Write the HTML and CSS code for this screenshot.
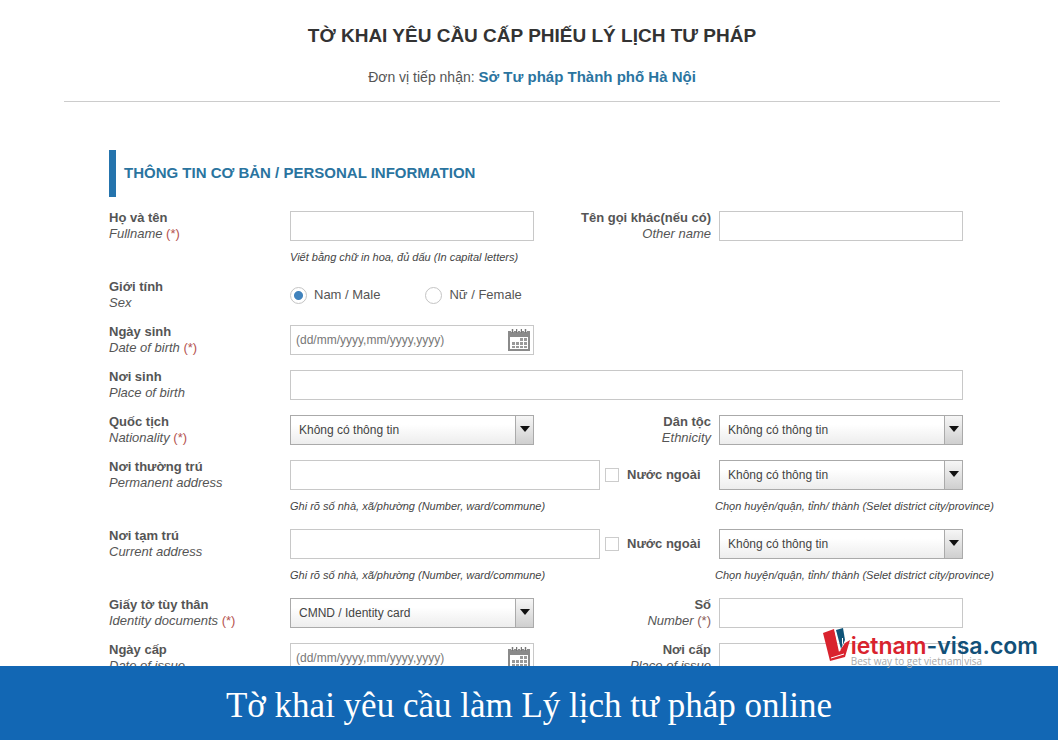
FILE: index.html
```html
<!DOCTYPE html>
<html lang="vi">
<head>
<meta charset="utf-8">
<meta name="viewport" content="width=device-width, initial-scale=1">
<title>Tờ khai yêu cầu cấp phiếu lý lịch tư pháp</title>
<link rel="stylesheet" href="styles.css">
</head>
<body>
<svg class="defs" aria-hidden="true">
  <symbol id="calendar" viewBox="0 0 24 24">
    <path fill="#8a8a8a" d="M1 3h22v20H1z"/>
    <path fill="#fff" d="M3 9h18v12H3z"/>
    <path fill="#ddd" d="M4 1h3v3H4zM9 1h2v3H9zM13 1h2v3h-2zM17 1h3v3h-3z"/>
    <path fill="#777" d="M5 1h1v4H5zM9 1h1v4H9zM14 1h1v4h-1zM18 1h1v4h-1z"/>
    <path fill="#999" d="M13 10h3v3h-3zM17 10h3v3h-3zM5 14h3v3H5zM9 14h3v3H9zM13 14h3v3h-3zM17 14h3v3h-3zM5 18h3v2H5zM9 18h3v2H9zM13 18h3v2h-3zM17 18h3v2h-3z"/>
  </symbol>
</svg>
<main class="page">
  <header class="head">
    <h1 class="title">TỜ KHAI YÊU CẦU CẤP PHIẾU LÝ LỊCH TƯ PHÁP</h1>
    <p class="unit">Đơn vị tiếp nhận: <strong class="unit-name">Sở Tư pháp Thành phố Hà Nội</strong></p>
  </header>
  <form class="form">
    <h2 class="section">THÔNG TIN CƠ BẢN / PERSONAL INFORMATION</h2>

    <div class="row">
      <label class="label" for="fullname"><b>Họ và tên</b><i>Fullname <span class="req">(*)</span></i></label>
      <div class="field"><input class="text" id="fullname" type="text"><p class="hint">Viết bằng chữ in hoa, đủ dấu (In capital letters)</p></div>
      <label class="label label-right" for="othername"><b>Tên gọi khác(nếu có)</b><i>Other name</i></label>
      <div class="field"><input class="text" id="othername" type="text"></div>
    </div>

    <div class="row" role="radiogroup" aria-labelledby="sex">
      <div class="label" id="sex"><b>Giới tính</b><i>Sex</i></div>
      <div class="field radios">
        <label class="choice"><input class="radio" type="radio" name="sex" checked>Nam / Male</label>
        <label class="choice"><input class="radio" type="radio" name="sex">Nữ / Female</label>
      </div>
    </div>

    <div class="row">
      <label class="label" for="birth"><b>Ngày sinh</b><i>Date of birth <span class="req">(*)</span></i></label>
      <div class="field"><div class="date"><input class="date-input" id="birth" type="text" placeholder="(dd/mm/yyyy,mm/yyyy,yyyy)"><button class="date-button" type="button" aria-label="Chọn ngày"><svg class="icon"><use href="#calendar"/></svg></button></div></div>
    </div>

    <div class="row">
      <label class="label" for="place"><b>Nơi sinh</b><i>Place of birth</i></label>
      <div class="field wide"><input class="text" id="place" type="text"></div>
    </div>

    <div class="row">
      <label class="label" for="nationality"><b>Quốc tịch</b><i>Nationality <span class="req">(*)</span></i></label>
      <div class="field"><div class="select"><select class="select-box" id="nationality"><option>Không có thông tin</option></select></div></div>
      <label class="label label-right" for="ethnicity"><b>Dân tộc</b><i>Ethnicity</i></label>
      <div class="field"><div class="select"><select class="select-box" id="ethnicity"><option>Không có thông tin</option></select></div></div>
    </div>

    <div class="row">
      <label class="label" for="permanent"><b>Nơi thường trú</b><i>Permanent address</i></label>
      <div class="field address">
        <div class="line"><input class="text" id="permanent" type="text"><label class="abroad"><input class="check" type="checkbox">Nước ngoài</label></div>
        <p class="hint">Ghi rõ số nhà, xã/phường (Number, ward/commune)</p>
      </div>
      <div class="field"><div class="select"><select class="select-box" aria-label="Huyện/quận, tỉnh/thành thường trú"><option>Không có thông tin</option></select></div><p class="hint hint-long">Chọn huyện/quận, tỉnh/ thành (Selet district city/province)</p></div>
    </div>

    <div class="row">
      <label class="label" for="current"><b>Nơi tạm trú</b><i>Current address</i></label>
      <div class="field address">
        <div class="line"><input class="text" id="current" type="text"><label class="abroad"><input class="check" type="checkbox">Nước ngoài</label></div>
        <p class="hint">Ghi rõ số nhà, xã/phường (Number, ward/commune)</p>
      </div>
      <div class="field"><div class="select"><select class="select-box" aria-label="Huyện/quận, tỉnh/thành tạm trú"><option>Không có thông tin</option></select></div><p class="hint hint-long">Chọn huyện/quận, tỉnh/ thành (Selet district city/province)</p></div>
    </div>

    <div class="row">
      <label class="label" for="document"><b>Giấy tờ tùy thân</b><i>Identity documents <span class="req">(*)</span></i></label>
      <div class="field"><div class="select"><select class="select-box" id="document"><option>CMND / Identity card</option></select></div></div>
      <label class="label label-right" for="number"><b>Số</b><i>Number <span class="req">(*)</span></i></label>
      <div class="field"><input class="text" id="number" type="text"></div>
    </div>

    <div class="row">
      <label class="label" for="issued"><b>Ngày cấp</b><i>Date of issue</i></label>
      <div class="field"><div class="date"><input class="date-input" id="issued" type="text" placeholder="(dd/mm/yyyy,mm/yyyy,yyyy)"><button class="date-button" type="button" aria-label="Chọn ngày"><svg class="icon"><use href="#calendar"/></svg></button></div></div>
      <label class="label label-right" for="issuer"><b>Nơi cấp</b><i>Place of issue</i></label>
      <div class="field"><input class="text" id="issuer" type="text"></div>
    </div>
  </form>
</main>
<footer class="banner">
  <div class="logo">
    <svg class="logo-mark" viewBox="0 0 32 34" aria-hidden="true">
      <path fill="#0f5478" d="M13 2l7-2 2 12-4 9z"/>
      <path fill="#fff" d="M19 10l1 0 0 5-1 3z"/>
      <path fill="#d9232e" d="M0 5l11-4 5 23 6-9 5-3-5 17-15 4z"/>
      <path fill="none" stroke="#fff" d="M8 30l13-4M12 2l5 21"/>
    </svg>
    <div class="logo-words">
      <div class="logo-name"><span class="logo-red">ietnam</span>-visa.com</div>
      <div class="logo-tag">Best way to get vietnam visa</div>
    </div>
  </div>
  <p class="caption">Tờ khai yêu cầu làm Lý lịch tư pháp online</p>
</footer>
</body>
</html>
```
FILE: styles.css
```css
* { box-sizing: border-box; }
body {
  margin: 0;
  height: 100vh;
  display: flex;
  flex-direction: column;
  background: #fff;
  color: #555;
  font: 13px/16px "Liberation Sans", Arial, sans-serif;
}
h1, h2, p { margin: 0; }
input, select, button { font: inherit; color: inherit; margin: 0; }
.defs { display: none; }
.page { flex: 1; min-height: 0; overflow: hidden; padding: 24px 58px 0 64px; }

.head { text-align: center; border-bottom: 1px solid #ccc; padding-bottom: 14px; }
.title { color: #333; font-size: 19px; line-height: 24px; }
.unit { margin-top: 19px; font-size: 14px; line-height: 20px; }
.unit-name { color: #2a749f; font-size: 15px; }

.form { padding: 48px 37px 0 45px; display: flex; flex-direction: column; gap: 12px; }
.section {
  border-left: 7px solid #2574ad;
  padding: 0 8px 2px;
  color: #2a749f;
  font-size: 15px;
  line-height: 45px;
}
.row { display: grid; grid-template-columns: 181px minmax(0, 1fr) 185px minmax(0, 1fr); }
.label { padding-top: 1px; }
.label b, .label i { display: block; }
.label-right { text-align: right; padding-right: 8px; }
.req { color: #b5534f; font-style: normal; }
.label-right .req { color: #8a5a58; }
.field { padding: 2px 0 1px; }
.wide { grid-column: 2 / 5; }
.address { grid-column: 2 / 4; }
.text, .date, .select-box {
  display: block;
  width: 100%;
  height: 30px;
  border: 1px solid #c8c8c8;
  border-radius: 0;
  background: #fff;
}
.text { padding: 0 6px; }
.hint { margin-top: 8px; font-size: 11px; font-style: italic; color: #444; white-space: nowrap; }
.hint-long { margin-left: -4px; margin-right: -40px; }

.radios { display: flex; gap: 45px; align-items: center; }
.choice { display: flex; align-items: center; gap: 7px; white-space: nowrap; }
.radio {
  appearance: none;
  width: 17px;
  height: 17px;
  border: 1px solid #c4c4c4;
  border-radius: 50%;
  background: #fff;
}
.radio:checked { background: radial-gradient(circle, #4183bd 0 4px, #fff 5px); }

.date { display: flex; align-items: center; padding: 0 2px 0 5px; }
.date-input { flex: 1; min-width: 0; border: 0; padding: 0; background: none; font-size: 12px; }
.date-input::placeholder { color: #777; opacity: 1; }
.date-button { border: 0; padding: 0; background: none; width: 24px; height: 24px; }
.icon { display: block; width: 24px; height: 24px; }

.select { position: relative; }
.select-box {
  appearance: none;
  padding: 0 24px 1px 8px;
  border-color: #aaa;
  background: linear-gradient(#fff 30%, #ededed);
  color: #444;
  font-size: 12px;
}
.select::before {
  content: "";
  position: absolute;
  top: 1px;
  right: 1px;
  bottom: 1px;
  width: 17px;
  border-left: 1px solid #aaa;
  background: linear-gradient(#f6f6f6, #cfcfcf);
  pointer-events: none;
}
.select::after {
  content: "";
  position: absolute;
  top: 11px;
  right: 4px;
  border: 5px solid transparent;
  border-top: 6px solid #111;
  border-bottom: 0;
  pointer-events: none;
}
.line { display: flex; }
.line .text { flex: 1; min-width: 0; }
.abroad { flex: none; width: 119px; padding-left: 5px; display: flex; align-items: center; gap: 8px; font-weight: bold; white-space: nowrap; }
.check { appearance: none; width: 14px; height: 14px; border: 1px solid #ccc; background: #fff; }

.banner { position: relative; flex: none; background: #1267b4; padding: 20px 0 14px; }
.caption { color: #fff; font: 35px/40px "Liberation Serif", "Times New Roman", serif; text-align: center; }
.logo { position: absolute; right: 20px; bottom: 100%; display: flex; }
.logo-mark { width: 32px; height: 34px; margin: 0 -4px 0 0; overflow: visible; }
.logo-words { padding-top: 8px; white-space: nowrap; }
.logo-name { color: #125078; font: 600 23px/20px Inter, sans-serif; }
.logo-red { color: #d9232e; }
.logo-tag { color: #aaa; font: 10px/10px "Open Sans", sans-serif; }
```
